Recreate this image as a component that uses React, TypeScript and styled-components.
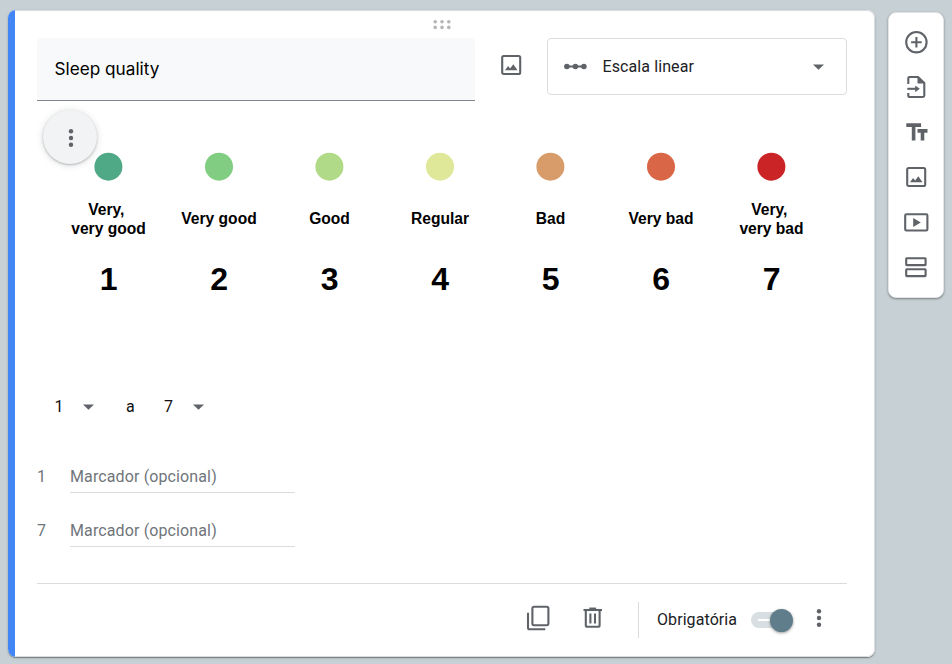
import React from 'react';
import styled, { createGlobalStyle } from 'styled-components';

const GlobalStyle = createGlobalStyle`
  * { box-sizing: border-box; }
  body {
    margin: 0;
    background: #c7d1d5;
    font-family: Roboto, "Liberation Sans", sans-serif;
    color: #202124;
  }
`;

const ICON = '#5f6368';

const Page = styled.main`
  display: flex;
  align-items: flex-start;
  gap: 13px;
  width: 952px;
  height: 664px;
  padding: 10px 8px 0;
  overflow: hidden;
`;

const Card = styled.section`
  display: flex;
  width: 867px;
  height: 647px;
  border-radius: 8px;
  background: #fff;
  overflow: hidden;
`;

const CardShadow = styled.div`
  border-radius: 8px;
  box-shadow: 0 1px 1px rgba(0, 0, 0, 0.34), 0 1px 3px rgba(0, 0, 0, 0.14);
`;

const Accent = styled.div`
  width: 7px;
  background: #4285f4;
`;

const CardBody = styled.div`
  flex: 1;
  display: flex;
  flex-direction: column;
  padding: 0 27px 0 22px;
  border: 1px solid #dadce0;
  border-left: 0;
  border-radius: 0 8px 8px 0;
`;

const Handle = styled.div`
  display: flex;
  justify-content: center;
  height: 27px;
  padding-top: 8px;
`;

const HeaderRow = styled.header`
  display: flex;
  align-items: flex-start;
  height: 63px;
`;

const TitleField = styled.div`
  width: 438px;
  height: 63px;
  padding: 0 17.5px;
  border-bottom: 1px solid #80868b;
  border-radius: 4px 4px 0 0;
  background: #f8f9fa;
  font: 400 17.2px/62px Inter, sans-serif;
  color: #000;
`;

const HeaderIcon = styled.div`
  display: flex;
  justify-content: center;
  width: 72px;
  padding: 15px 0 0;
`;

const TypeSelect = styled.div`
  display: flex;
  align-items: center;
  width: 300px;
  height: 57px;
  padding: 0 22px 0 15.5px;
  border: 1px solid #dadce0;
  border-radius: 4px;
  font-size: 16px;
  letter-spacing: 0.1px;
`;

const TypeName = styled.span`
  flex: 1;
  padding-left: 15px;
`;

const Picture = styled.figure`
  position: relative;
  display: grid;
  grid-template-columns: repeat(7, 110.5px);
  height: 277px;
  margin: 0;
  padding: 51.5px 0 0 16px;
  align-items: start;
`;

const PictureMenu = styled.button`
  position: absolute;
  left: 6px;
  top: 9px;
  display: grid;
  place-items: center;
  width: 54px;
  height: 54px;
  padding: 1px 0 0 1px;
  border: 0;
  border-radius: 50%;
  background: #f1f3f4;
  box-shadow: 0 1px 2px rgba(60, 64, 67, 0.3), 0 1px 6px 1px rgba(60, 64, 67, 0.15);
`;

const Level = styled.div`
  display: flex;
  flex-direction: column;
  align-items: center;
  font-family: "Liberation Sans", Arial, sans-serif;
  font-weight: 700;
  color: #000;
`;

const Dot = styled.svg`
  display: block;
  width: 28px;
  height: 28px;
  overflow: visible;
`;

const LevelLabel = styled.div`
  display: flex;
  flex-direction: column;
  justify-content: center;
  align-items: center;
  height: 40px;
  margin-top: 18px;
  padding-left: 0.5px;
  font-size: 15.6px;
  line-height: 19px;
  white-space: pre;
`;

const LevelNumber = styled.div`
  margin-top: 22px;
  padding-left: 1px;
  font-size: 32px;
  line-height: 37px;
`;

const RangeRow = styled.div`
  display: flex;
  align-items: center;
  height: 57px;
  padding-left: 17.5px;
  font-size: 16px;
`;

const RangeValue = styled.span<{ $width: number }>`
  width: ${(p) => p.$width}px;
  color: #111;
`;

const MarkerRow = styled.label<{ $gap?: number }>`
  display: flex;
  height: 32px;
  margin-top: ${(p) => p.$gap ?? 0}px;
  font-size: 16px;
  line-height: 32px;
  color: #70757a;
`;

const MarkerIndex = styled.span`
  width: 33px;
`;

const MarkerField = styled.span`
  width: 225px;
  border-bottom: 1px solid #dadce0;
  letter-spacing: 0.12px;
`;

const Footer = styled.footer`
  display: flex;
  align-items: center;
  height: 73px;
  margin-top: 36px;
  border-top: 1px solid #dadce0;
  padding-left: 489px;
`;

const FooterAction = styled.div<{ $width: number }>`
  display: flex;
  flex: none;
  width: ${(p) => p.$width}px;
  padding-bottom: 5px;
`;

const Required = styled.div`
  display: flex;
  align-items: center;
  flex: none;
  width: 113px;
  height: 36px;
  padding: 0 0 2px 18px;
  border-left: 1px solid #dadce0;
  font-size: 16px;
  letter-spacing: 0.08px;
`;

const Toggle = styled.div`
  position: relative;
  flex: none;
  display: flex;
  align-items: center;
  width: 36px;
  height: 16px;
  padding-left: 7px;
  border-radius: 8px;
  background: #d7dfe2;
`;

const ToggleDash = styled.span`
  width: 13px;
  height: 2px;
  background: #fff;
`;

const ToggleThumb = styled.span`
  position: absolute;
  left: 19px;
  top: -3px;
  width: 23px;
  height: 23px;
  border-radius: 50%;
  background: #607d8b;
  box-shadow: 0 1px 3px rgba(0, 0, 0, 0.4);
`;

const MoreSlot = styled.div`
  flex: none;
  display: flex;
  margin-left: 29px;
  padding-bottom: 4px;
`;

const SideBar = styled.aside`
  display: flex;
  flex-direction: column;
  align-items: center;
  gap: 21px;
  width: 56px;
  height: 286px;
  margin-top: 2px;
  padding-top: 17px;
  border: 1px solid #e3e6e8;
  border-radius: 8px;
  background: #fff;
  box-shadow: 0 1px 2px rgba(0, 0, 0, 0.3), 0 1px 3px rgba(0, 0, 0, 0.12);
`;

const Svg = styled.svg`
  display: block;
  flex: none;
  overflow: visible;
`;

type IconProps = { children: React.ReactNode; w?: number; h?: number };
const Icon = ({ children, w = 24, h = 24 }: IconProps) => (
  <Svg width={w} height={h} viewBox={`0 0 ${w} ${h}`} fill="none" stroke={ICON} strokeWidth={2.1}>
    {children}
  </Svg>
);

const ImageIcon = () => (
  <Icon>
    <rect x="3.2" y="3" width="18" height="18" rx="1.5" />
    <path d="M6 17.2l3.1-4.1 2 2.4 3.2-4.2 4.2 5.9z" fill={ICON} stroke="none" />
  </Icon>
);

const Caret = () => (
  <Icon w={11} h={6}>
    <path d="M0 .4h11L5.5 5.8z" fill={ICON} stroke="none" />
  </Icon>
);

const MoreIcon = () => (
  <Icon w={6} h={20}>
    <g fill={ICON} stroke="none">
      <circle cx="3" cy="3.2" r="2.2" />
      <circle cx="3" cy="10" r="2.2" />
      <circle cx="3" cy="16.8" r="2.2" />
    </g>
  </Icon>
);

const HandleIcon = () => (
  <Svg width="18" height="12" viewBox="0 0 18 12" fill="#b5b5b5">
    {[2.2, 9, 15.8].map((x) => (
      <g key={x}>
        <circle cx={x} cy="2.7" r="1.8" />
        <circle cx={x} cy="8.4" r="1.8" />
      </g>
    ))}
  </Svg>
);

const ScaleIcon = () => (
  <Icon w={24} h={8}>
    <path d="M3 3.5h18" strokeWidth="2.2" />
    <g fill={ICON} stroke="none">
      <circle cx="2.9" cy="3.5" r="2.8" />
      <circle cx="11.4" cy="3.5" r="2.8" />
      <circle cx="19.9" cy="3.5" r="2.8" />
    </g>
  </Icon>
);

const CopyIcon = () => (
  <Icon w={24} h={28}>
    <rect x="6.4" y="2.8" width="16" height="18.4" rx="1.6" />
    <path d="M2 8.8v15q0 1.5 1.5 1.5h15.8" />
  </Icon>
);

const TrashIcon = () => (
  <Icon w={20} h={24}>
    <path d="M.5 4h18.5" />
    <path d="M6.3 2.6h6.8" />
    <path d="M2.8 4v15.2q0 1.6 1.6 1.6h10.6q1.6 0 1.6-1.6V4M7.4 7.5v10M12 7.5v10" />
  </Icon>
);

const AddIcon = () => (
  <Icon>
    <circle cx="12.4" cy="12.2" r="10.2" />
    <path d="M12.4 6.9v10.6M7.1 12.2h10.6" />
  </Icon>
);

const ImportIcon = () => (
  <Icon>
    <path d="M4.3 9V3.4Q4.3 2 5.7 2H14l6.3 6v12.6q0 1.4-1.4 1.4H5.7Q4.3 22 4.3 20.6V18" />
    <path d="M13.5 1.2v7.4h7.4z" fill={ICON} stroke="none" />
    <path d="M3.3 13.8h9" />
    <path d="M11.2 10.4l4.6 3.4-4.6 3.4z" fill={ICON} stroke="none" />
  </Icon>
);

const TextIcon = () => (
  <Icon>
    <g strokeWidth="3.6">
      <path d="M2.3 5.1h14.8M9.6 5v15.5" />
      <path d="M13.5 10.9h10M18.5 11v9.5" />
    </g>
  </Icon>
);

const VideoIcon = () => (
  <Icon>
    <rect x="1.2" y="4.3" width="22.2" height="16.2" rx="1.2" />
    <path d="M9.2 7.9v9l7.6-4.5z" fill={ICON} stroke="none" />
  </Icon>
);

const SectionIcon = () => (
  <Icon>
    <rect x="2.2" y="3.2" width="19.4" height="6.9" rx=".5" />
    <rect x="2.2" y="14.2" width="19.4" height="6.9" rx=".5" />
  </Icon>
);

const LEVELS = [
  { label: 'Very, \nvery good', color: '#4fa886' },
  { label: 'Very good', color: '#81ce82' },
  { label: 'Good', color: '#b0da87' },
  { label: 'Regular', color: '#dfe799' },
  { label: 'Bad', color: '#d89c6a' },
  { label: 'Very bad', color: '#d96747' },
  { label: 'Very, \nvery bad', color: '#ca2427' },
];

export default function App() {
  return (
    <>
      <GlobalStyle />
      <Page>
        <CardShadow>
          <Card>
            <Accent />
            <CardBody>
              <Handle>
                <HandleIcon />
              </Handle>
              <HeaderRow>
                <TitleField>Sleep quality</TitleField>
                <HeaderIcon>
                  <ImageIcon />
                </HeaderIcon>
                <TypeSelect>
                  <ScaleIcon />
                  <TypeName>Escala linear</TypeName>
                  <Caret />
                </TypeSelect>
              </HeaderRow>
              <Picture>
                {LEVELS.map((level, i) => (
                  <Level key={level.label}>
                    <Dot viewBox="0 0 28 28">
                      <circle cx={i % 2 ? 14 : 14.4} cy="13.7" r="14" fill={level.color} />
                    </Dot>
                    <LevelLabel>
                      {level.label.split('\n').map((line) => (
                        <span key={line}>{line}</span>
                      ))}
                    </LevelLabel>
                    <LevelNumber>{i + 1}</LevelNumber>
                  </Level>
                ))}
                <PictureMenu aria-label="Mais opções">
                  <MoreIcon />
                </PictureMenu>
              </Picture>
              <RangeRow>
                <RangeValue $width={28.5}>1</RangeValue>
                <Caret />
                <RangeValue $width={32} />
                <RangeValue $width={38}>a</RangeValue>
                <RangeValue $width={29}>7</RangeValue>
                <Caret />
              </RangeRow>
              <MarkerRow $gap={26}>
                <MarkerIndex>1</MarkerIndex>
                <MarkerField>Marcador (opcional)</MarkerField>
              </MarkerRow>
              <MarkerRow $gap={22}>
                <MarkerIndex>7</MarkerIndex>
                <MarkerField>Marcador (opcional)</MarkerField>
              </MarkerRow>
              <Footer>
                <FooterAction $width={57}>
                  <CopyIcon />
                </FooterAction>
                <FooterAction $width={55}>
                  <TrashIcon />
                </FooterAction>
                <Required>Obrigatória</Required>
                <Toggle>
                  <ToggleDash />
                  <ToggleThumb />
                </Toggle>
                <MoreSlot>
                  <MoreIcon />
                </MoreSlot>
              </Footer>
            </CardBody>
          </Card>
        </CardShadow>
        <SideBar>
          <AddIcon />
          <ImportIcon />
          <TextIcon />
          <ImageIcon />
          <VideoIcon />
          <SectionIcon />
        </SideBar>
      </Page>
    </>
  );
}
